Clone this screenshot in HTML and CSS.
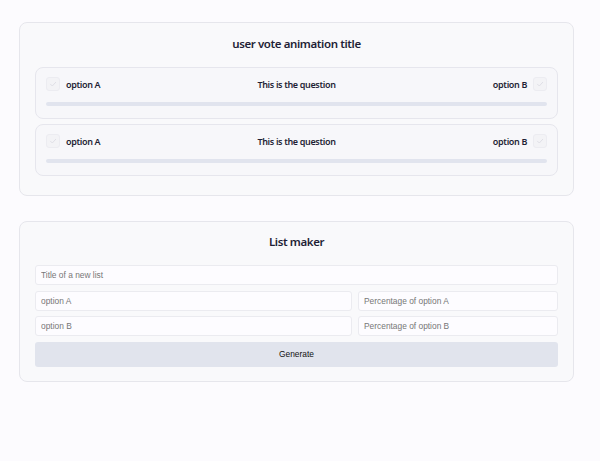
FILE: index.html
```html
<!DOCTYPE html>
<html lang="en">
<head>
    <meta charset="UTF-8">
    <meta name="viewport" content="width=device-width, initial-scale=1.0">
    <title>User vote animation</title>
    <link rel="stylesheet" href="styles.css">
</head>
<body>

<div class="card">
    <h2>user vote animation title</h2>

    <div class="vote">
        <div class="vote-row">
            <div class="side">
                <span class="check">
                    <svg viewBox="0 0 14 14" width="14" height="14"><path d="M4.5 7.2 L6.3 9 L9.7 5.3" fill="none" stroke="#dcdce4" stroke-width="0.9" stroke-linecap="round" stroke-linejoin="round"/></svg>
                </span>
                <span>option A</span>
            </div>
            <div class="question">This is the question</div>
            <div class="side right">
                <span>option B</span>
                <span class="check">
                    <svg viewBox="0 0 14 14" width="14" height="14"><path d="M4.5 7.2 L6.3 9 L9.7 5.3" fill="none" stroke="#dcdce4" stroke-width="0.9" stroke-linecap="round" stroke-linejoin="round"/></svg>
                </span>
            </div>
        </div>
        <div class="bar"></div>
    </div>

    <div class="vote">
        <div class="vote-row">
            <div class="side">
                <span class="check">
                    <svg viewBox="0 0 14 14" width="14" height="14"><path d="M4.5 7.2 L6.3 9 L9.7 5.3" fill="none" stroke="#dcdce4" stroke-width="0.9" stroke-linecap="round" stroke-linejoin="round"/></svg>
                </span>
                <span>option A</span>
            </div>
            <div class="question">This is the question</div>
            <div class="side right">
                <span>option B</span>
                <span class="check">
                    <svg viewBox="0 0 14 14" width="14" height="14"><path d="M4.5 7.2 L6.3 9 L9.7 5.3" fill="none" stroke="#dcdce4" stroke-width="0.9" stroke-linecap="round" stroke-linejoin="round"/></svg>
                </span>
            </div>
        </div>
        <div class="bar"></div>
    </div>
</div>

<div class="card maker">
    <h2>List maker</h2>
    <form class="maker-form">
        <input type="text" class="full" placeholder="Title of a new list">
        <input type="text" placeholder="option A">
        <input type="text" placeholder="Percentage of option A">
        <input type="text" placeholder="option B">
        <input type="text" placeholder="Percentage of option B">
        <button type="button" class="full">Generate</button>
    </form>
</div>

</body>
</html>
```

FILE: styles.css
```css
body {
    margin: 0;
    padding: 22px 26px 0 19px;
    background-color: #fcfbfe;
    font-family: 'Noto Sans', sans-serif;
    color: #1f1f36;
}

.card {
    background-color: #f9f9fb;
    border: 1px solid #e6e6ec;
    border-radius: 8px;
    padding: 0 15px 14px;
}

.card h2 {
    margin: 0;
    padding: 11px 0 13px;
    text-align: center;
    font-size: 11.5px;
    font-weight: 600;
    letter-spacing: -0.4px;
    line-height: 20px;
}

.vote {
    background-color: #f7f7fa;
    border: 1px solid #e6e6ed;
    border-radius: 8px;
    padding: 9px 10px 12px;
    margin-bottom: 5px;
}

.vote-row {
    display: flex;
    justify-content: space-between;
    align-items: center;
    height: 14px;
    font-size: 9px;
    font-weight: 600;
    letter-spacing: -0.35px;
}

.side {
    display: flex;
    align-items: center;
    gap: 6px;
    width: 120px;
}

.side.right {
    justify-content: flex-end;
}

.check {
    width: 14px;
    height: 14px;
    border: 1px solid #ececf1;
    border-radius: 3px;
    background-color: #f3f3f6;
    box-sizing: border-box;
    display: flex;
}

.check svg {
    margin: -1px;
}

.bar {
    height: 4px;
    margin-top: 11px;
    border-radius: 2px;
    background-color: #e1e4ee;
}

.maker {
    margin-top: 25px;
    padding-bottom: 14px;
}

.maker h2 {
    padding: 10px 0 13px;
}

.maker-form {
    display: grid;
    grid-template-columns: 317px 1fr;
    column-gap: 6px;
    row-gap: 5.5px;
}

.maker-form .full {
    grid-column: 1 / -1;
}

input[type="text"] {
    height: 20px;
    box-sizing: border-box;
    padding: 0 5px;
    border: 1px solid #ebebf0;
    border-radius: 3px;
    background-color: #fdfcff;
    font-family: 'Liberation Sans', Arial, sans-serif;
    font-size: 8.4px;
    color: #333;
}

input::placeholder {
    color: #777;
}

button {
    height: 25px;
    border: none;
    border-radius: 3px;
    background-color: #e1e4ed;
    font-family: 'Liberation Sans', Arial, sans-serif;
    font-size: 8.4px;
    color: #111;
}
```
